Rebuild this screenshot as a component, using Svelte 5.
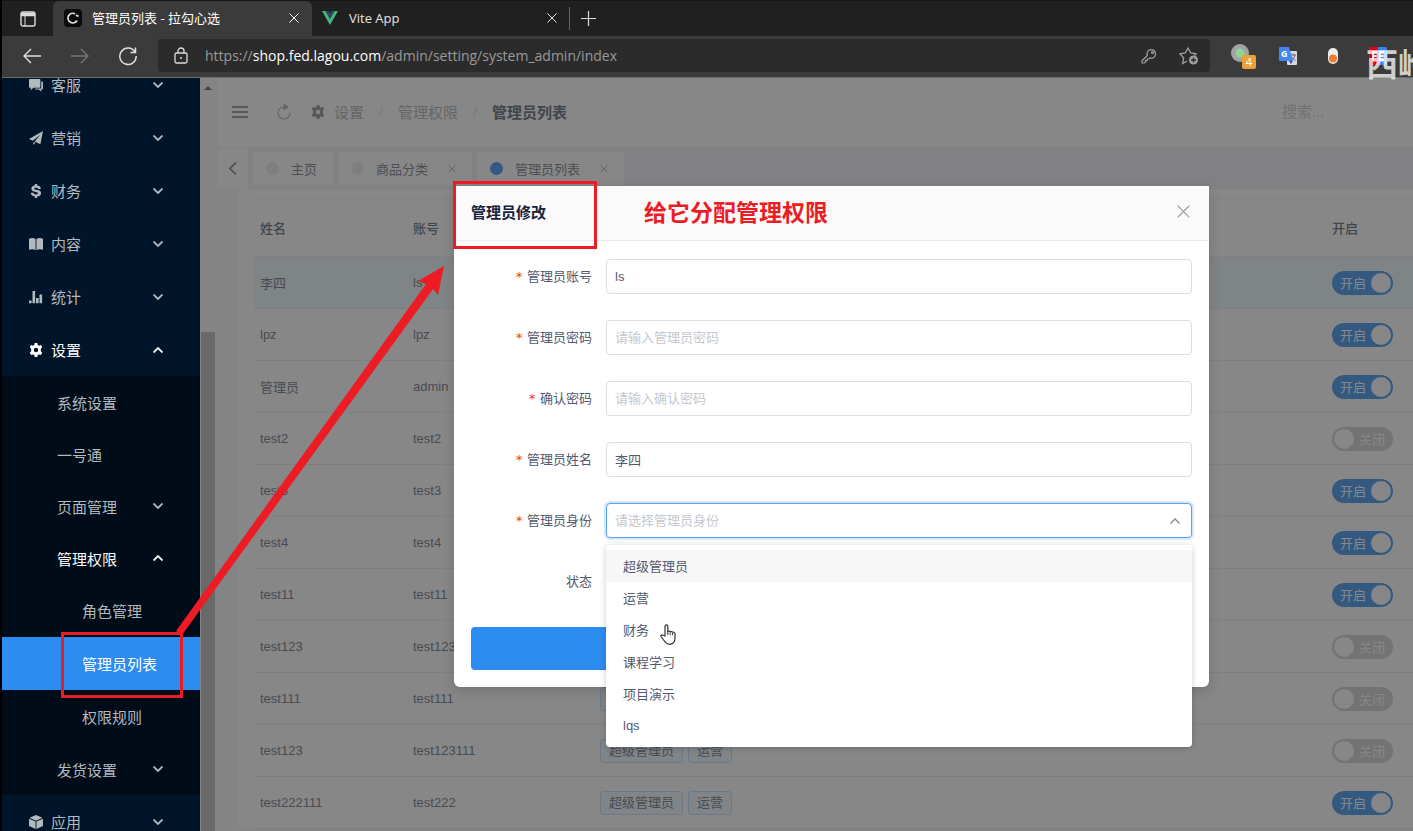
<script lang="ts">
  type MenuItem = {
    title: string;
    icon?: string;
    level: number;
    arrow?: 'down' | 'up';
    open?: boolean;
    active?: boolean;
  };

  const menu: MenuItem[] = [
    { title: '客服', icon: 'chat', level: 1, arrow: 'down' },
    { title: '营销', icon: 'plane', level: 1, arrow: 'down' },
    { title: '财务', icon: 'dollar', level: 1, arrow: 'down' },
    { title: '内容', icon: 'book', level: 1, arrow: 'down' },
    { title: '统计', icon: 'stats', level: 1, arrow: 'down' },
    { title: '设置', icon: 'gear', level: 1, arrow: 'up', open: true },
    { title: '系统设置', level: 2 },
    { title: '一号通', level: 2 },
    { title: '页面管理', level: 2, arrow: 'down' },
    { title: '管理权限', level: 2, arrow: 'up', open: true },
    { title: '角色管理', level: 3 },
    { title: '管理员列表', level: 3, active: true },
    { title: '权限规则', level: 3 },
    { title: '发货设置', level: 2, arrow: 'down' },
    { title: '应用', icon: 'cube', level: 1, arrow: 'down' },
  ];

  // Solid 16x16 icons
  const icons: Record<string, string> = {
    chat: 'M1 1h11a1 1 0 0 1 1 1v8a1 1 0 0 1-1 1H5l-3 3v-3H1a1 1 0 0 1-1-1V2a1 1 0 0 1 1-1zM14 4h1a1 1 0 0 1 1 1v7a1 1 0 0 1-1 1h-1v2.500L11 13H7v-1h6a1 1 0 0 0 1-1z',
    plane: 'M16 0L0 9l4.500 2L13 4 6.500 12l6.500 3zM5 12.500V16l2.500-2.500z',
    dollar:
      'M6.700 0h2.600v1.800c2.600.3 4.200 1.700 4.200 3.900h-3.200c0-1-.7-1.500-2.200-1.500-1.400 0-2 .4-2 1.100 0 .8.9 1 2.800 1.400C11.700 7.200 13.800 8.100 13.800 10.600c0 2.100-1.700 3.400-4.500 3.700V16H6.700v-1.700c-3-.3-4.600-1.800-4.600-4.200h3.200c0 1.200.9 1.800 2.600 1.800 1.600 0 2.400-.4 2.400-1.300 0-.9-.9-1.200-2.900-1.600C4.800 8.400 2.700 7.600 2.700 5.300 2.700 3.400 4.200 2.100 6.700 1.800z',
    book: 'M0 2c3-1.500 5.500-1.200 7.500.2V15C5.500 13.700 3 13.500 0 14.500zM8.500 2.200C10.500.8 13 .5 16 2v12.500c-3-1-5.500-.8-7.500.5z',
    stats: 'M0 12h3v3H0zM4 1h3v14H4zM8 9h3v6H8zM12 5h3v10h-3z',
    gear: 'M6.500 0h3l.5 2.200 1.400.8 2.200-.7 1.500 2.600L13.500 6.500v3l1.600 1.600-1.500 2.600-2.200-.7-1.400.8-.5 2.200h-3L6 13.800 4.600 13l-2.200.7L.9 11.100 2.500 9.500v-3L.9 4.900l1.500-2.600 2.200.7L6 2.200zM8 5.500a2.500 2.500 0 1 0 0 5 2.500 2.500 0 0 0 0-5z',
    cube: 'M8 0l7.500 3.200L8 6.500.5 3.200zM0 4.200l7.500 3.200V16L0 12.500zM16 4.200L8.500 7.400V16l7.500-3.500z',
  };

  const pageTabs = [
    { title: '主页', closable: false, active: false },
    { title: '商品分类', closable: true, active: false },
    { title: '管理员列表', closable: true, active: true },
  ];

  type Admin = { name: string; account: string; on: boolean; roles?: string[]; selected?: boolean };

  let admins: Admin[] = $state([
    { name: '李四', account: 'ls', on: true, selected: true },
    { name: 'lpz', account: 'lpz', on: true },
    { name: '管理员', account: 'admin', on: true },
    { name: 'test2', account: 'test2', on: false },
    { name: 'test3', account: 'test3', on: true },
    { name: 'test4', account: 'test4', on: true },
    { name: 'test11', account: 'test11', on: true },
    { name: 'test123', account: 'test123', on: false },
    { name: 'test111', account: 'test111', on: false, roles: ['超级管理员', '运营'] },
    { name: 'test123', account: 'test123111', on: false, roles: ['超级管理员', '运营'] },
    { name: 'test222111', account: 'test222', on: true, roles: ['超级管理员', '运营'] },
  ]);

  const roles = ['超级管理员', '运营', '财务', '课程学习', '项目演示', 'lqs'];

  let account = $state('ls');
  let password = $state('');
  let confirmPassword = $state('');
  let realName = $state('李四');
  let role = $state('');
  let enabled = $state(true);
  let listOpen = $state(true);

  function pickRole(value: string) {
    role = value;
    listOpen = false;
  }
</script>

{#snippet solid(name: string)}
  <svg class="solid" viewBox="0 0 16 16" aria-hidden="true">
    <path d={icons[name]} fill="currentColor" fill-rule="evenodd" />
  </svg>
{/snippet}

{#snippet cross()}
  <svg class="cross" viewBox="0 0 10 10" aria-hidden="true">
    <path d="M0.500.5l9 9M9.500.5l-9 9" fill="none" stroke="currentColor" />
  </svg>
{/snippet}

<div class="window">
  <header class="browser">
    <div class="tab-strip">
      <button class="tab-actions" aria-label="标签操作">
        <svg width="16" height="16" viewBox="0 0 16 16" fill="none" stroke="#ddd">
          <rect x="1" y="1" width="14" height="14" rx="2" stroke-width="1.400" />
          <path d="M1 3.500h14" stroke-width="3.500" />
          <path d="M5 4v11" />
        </svg>
      </button>
      <div class="tab current">
        <svg class="favicon" viewBox="0 0 18 18">
          <rect width="18" height="18" rx="4" fill="#0a0a0a" />
          <path d="M11 4.800A4.800 4.800 0 1 0 13 11.500" fill="none" stroke="#ddd" stroke-width="1.800" />
          <path d="M12 6l2.500 1.500" stroke="#ddd" stroke-width="2" />
        </svg>
        <span class="tab-title">管理员列表 - 拉勾心选</span>
        <button class="tab-close" aria-label="关闭标签">{@render cross()}</button>
      </div>
      <div class="tab">
        <svg class="favicon" viewBox="0 0 18 18">
          <path d="M1 2h3.500L9 10l4.500-8H17L9 16z" fill="#41b883" />
          <path d="M4.500 2h3L9 4.800 10.500 2h3L9 10z" fill="#35495e" />
        </svg>
        <span class="tab-title">Vite App</span>
        <button class="tab-close" aria-label="关闭标签">{@render cross()}</button>
      </div>
      <button class="new-tab" aria-label="新建标签">
        <svg width="15" height="15" viewBox="0 0 15 15" stroke="#ddd" stroke-width="1.200">
          <path d="M7.500 0v15M0 7.500h15" />
        </svg>
      </button>
    </div>

    <div class="toolbar">
      <nav class="history">
        <button aria-label="后退">
          <svg width="20" height="20" viewBox="0 0 20 20" fill="none" stroke="#e0e0e0" stroke-width="1.400">
            <path d="M9 3l-7 7 7 7M2 10h17" />
          </svg>
        </button>
        <button aria-label="前进">
          <svg width="20" height="20" viewBox="0 0 20 20" fill="none" stroke="#757575" stroke-width="1.400">
            <path d="M11 3l7 7-7 7M18 10H1" />
          </svg>
        </button>
        <button aria-label="刷新">
          <svg width="20" height="20" viewBox="0 0 20 20" fill="none" stroke="#e0e0e0" stroke-width="1.500">
            <path d="M17 6a8.200 8.200 0 1 0 1.200 4M17.500 1.500V6.500H12.500" />
          </svg>
        </button>
      </nav>
      <div class="address">
        <svg width="14" height="18" viewBox="0 0 14 18" fill="none" stroke="#ddd" stroke-width="1.300">
          <rect x="1" y="6" width="12" height="10" rx="1.500" />
          <path d="M4 6V4a3 3 0 0 1 6 0v2" />
          <circle cx="7" cy="11" r="1" fill="#ddd" stroke="none" />
        </svg>
        <a class="url" href="#top">https://<b>shop.fed.lagou.com</b>/admin/setting/system_admin/index</a>
        <svg width="16" height="16" viewBox="0 0 16 16" fill="none" stroke="#a0a0a0" stroke-width="1.200">
          <path d="M6.300 7.500A4.300 4.300 0 1 1 9 10L7.800 11H6.200v1.700H4.500V14L3.500 15H1v-2.200z" />
          <circle cx="11.500" cy="4.500" r="1" />
        </svg>
        <svg width="20" height="20" viewBox="0 0 20 20" fill="none" stroke="#a0a0a0" stroke-width="1.300">
          <path d="M8 15l-4.300 2.500.9-5.600L1 7.800l5.300-.8L9 2l2.700 5 5.300.8-1.500 1.700" />
          <circle cx="14.500" cy="14" r="4.500" fill="#a0a0a0" stroke="none" />
          <path d="M14.500 11.500v5M12 14h5" stroke="#2b2b2b" />
        </svg>
      </div>
      <div class="extensions">
        <svg width="25" height="26" viewBox="0 0 25 26">
          <circle cx="9" cy="10" r="9" fill="#a3a3a3" />
          <circle cx="9" cy="10" r="4.500" fill="#8fd694" />
          <rect x="11" y="12" width="14" height="14" rx="2" fill="#e9a13b" />
          <text x="18" y="23" text-anchor="middle" font-size="11" fill="#fff">4</text>
        </svg>
        <svg width="18" height="18" viewBox="0 0 18 18">
          <rect x="8" y="4" width="10" height="14" rx="1" fill="#d8d8d8" />
          <path d="M11 8h6M14 6.500V8M16 8c-.5 3-2 4-4 5M12.500 9.500c.8 2 2 3 4 3.800" stroke="#667" fill="none" />
          <path d="M1 0h9l4 14H1a1 1 0 0 1-1-1V1a1 1 0 0 1 1-1z" fill="#4285f4" />
          <path d="M10 14h4l-2 3z" fill="#2b4fd0" />
          <text x="2" y="10" font-size="9" font-weight="bold" fill="#fff">G</text>
        </svg>
        <svg width="10" height="16" viewBox="0 0 10 16">
          <rect width="10" height="16" rx="5" fill="#eee" />
          <circle cx="5" cy="10.500" r="4" fill="#ee7b30" />
        </svg>
        <svg width="18" height="18" viewBox="0 0 18 18">
          <path d="M0 2a2 2 0 0 1 2-2h7v18H2a2 2 0 0 1-2-2z" fill="#e60012" />
          <path d="M9 0h7a2 2 0 0 1 2 2v14a2 2 0 0 1-2 2H9z" fill="#3b82f6" />
          <path d="M8 5H4v8M4 9h3.500M15 5h-4v8h4M11 9h3.500" fill="none" stroke="#fff" stroke-width="1.800" />
        </svg>
      </div>
    </div>
  </header>

  <div class="app">
    <aside class="sidebar">
      <ul class="menu">
        {#each menu as item}
          <li class="level-{item.level}" class:open={item.open} class:active={item.active}>
            <a href="#menu">
              {#if item.icon}{@render solid(item.icon)}{/if}
              <span>{item.title}</span>
              {#if item.arrow}
                <svg class="chevron" class:up={item.arrow === 'up'} viewBox="0 0 10 6" aria-hidden="true">
                  <path d="M.5.5L5 5 9.500.5" fill="none" stroke="currentColor" stroke-width="1.800" />
                </svg>
              {/if}
            </a>
          </li>
        {/each}
      </ul>
    </aside>

    <main class="main">
      <div class="scrollbar">
        <span class="scroll-arrow"></span>
        <span class="scroll-thumb"></span>
      </div>

      <div class="page">
        <div class="page-header">
          <button class="hamburger" aria-label="折叠菜单"><i></i><i></i><i></i></button>
          <button class="reload" aria-label="刷新">
            <svg width="14" height="16" viewBox="0 0 14 16" fill="none" stroke="#aaa" stroke-width="1.200">
              <path d="M7 3a6 6 0 1 0 6 6" />
              <path d="M7 .5L11 3 7 5.500z" fill="#aaa" />
            </svg>
          </button>
          <nav class="breadcrumb">
            {@render solid('gear')}
            <a href="#setting">设置</a>
            <span class="slash">/</span>
            <a href="#auth">管理权限</a>
            <span class="slash">/</span>
            <strong>管理员列表</strong>
          </nav>
          <input class="search" type="text" placeholder="搜索..." aria-label="搜索" />
        </div>

        <div class="page-tabs">
          <button class="tabs-prev" aria-label="向左">
            <svg width="8" height="13" viewBox="0 0 8 13" fill="none" stroke="currentColor" stroke-width="1.600">
              <path d="M7 .5l-6 6 6 6" />
            </svg>
          </button>
          {#each pageTabs as tab}
            <div class="page-tab" class:active={tab.active}>
              <span class="dot"></span>
              <span>{tab.title}</span>
              {#if tab.closable}
                <button aria-label="关闭{tab.title}">{@render cross()}</button>
              {/if}
            </div>
          {/each}
        </div>

        <div class="card">
          <table>
            <colgroup>
              <col class="col-name" />
              <col class="col-account" />
              <col />
              <col class="col-status" />
            </colgroup>
            <thead>
              <tr><th>姓名</th><th>账号</th><td></td><th>开启</th></tr>
            </thead>
            <tbody>
              {#each admins as admin}
                <tr class:selected={admin.selected}>
                  <td>{admin.name}</td>
                  <td>{admin.account}</td>
                  <td>
                    {#each admin.roles ?? [] as r}
                      <span class="tag">{r}</span>
                    {/each}
                  </td>
                  <td>
                    <label class="switch" class:on={admin.on}>
                      <input type="checkbox" bind:checked={admin.on} />
                      <span>{admin.on ? '开启' : '关闭'}</span>
                    </label>
                  </td>
                </tr>
              {/each}
            </tbody>
          </table>
        </div>
      </div>

      <div class="mask">
        <div class="modal" role="dialog" aria-labelledby="modal-title">
          <div class="modal-header">
            <h2 id="modal-title">管理员修改</h2>
            <button class="modal-close" aria-label="关闭">{@render cross()}</button>
          </div>
          <form class="modal-body">
            <div class="field required">
              <label for="account">管理员账号</label>
              <input id="account" type="text" bind:value={account} />
            </div>
            <div class="field required">
              <label for="password">管理员密码</label>
              <input id="password" type="password" placeholder="请输入管理员密码" bind:value={password} />
            </div>
            <div class="field required">
              <label for="confirm">确认密码</label>
              <input id="confirm" type="password" placeholder="请输入确认密码" bind:value={confirmPassword} />
            </div>
            <div class="field required">
              <label for="real-name">管理员姓名</label>
              <input id="real-name" type="text" bind:value={realName} />
            </div>
            <div class="field required">
              <label for="role">管理员身份</label>
              <div class="select">
                <select id="role" class:empty={!role} bind:value={role}>
                  <option value="">请选择管理员身份</option>
                  {#each roles as r}
                    <option value={r}>{r}</option>
                  {/each}
                </select>
                <svg class="chevron up" viewBox="0 0 10 6" aria-hidden="true">
                  <path d="M.5.5L5 5 9.500.5" fill="none" stroke="currentColor" stroke-width="1.300" />
                </svg>
                {#if listOpen}
                  <div class="options">
                    {#each roles as r, i}
                      <button type="button" class:focus={i === 0} onclick={() => pickRole(r)}>{r}</button>
                    {/each}
                  </div>
                {/if}
              </div>
            </div>
            <div class="field">
              <label for="status">状态</label>
              <input id="status" type="checkbox" bind:checked={enabled} />
            </div>
            <button class="submit" type="button" aria-label="提交"></button>
          </form>
        </div>
      </div>
    </main>
  </div>

  <!-- Tutorial marks drawn over the page -->
  <div class="marks">
    <div class="box box-menu"></div>
    <div class="box box-title"></div>
    <svg class="arrow" viewBox="0 0 280 380">
      <path d="M6 371L256 24 248 21 274 6 268 35 263 29 12 375z" fill="#ed1c24" />
    </svg>
    <p class="note">给它分配管理权限</p>
    <p class="watermark">西岭</p>
    <svg class="pointer" viewBox="0 0 17 21">
      <path
        d="M5 12V2.200a1.400 1.400 0 0 1 2.800 0V8c0-1.200 2.400-1.200 2.400.3 0-1.200 2.400-1 2.400.5 0-1 2.400-.8 2.400.8v4.500c0 3.500-2 6.200-5.500 6.200-3 0-4-1.500-5.500-3.800L1 12.500c-.6-1.200.8-2.200 1.900-1.200z"
        fill="#fff"
        stroke="#333"
        stroke-width="1.200"
      />
      <path d="M7.800 8v3M10.200 8.500v2.700M12.600 9v2.200" stroke="#333" />
    </svg>
  </div>
</div>

<style>
  :global(body) {
    background: #000;
  }

  .window,
  .window * {
    box-sizing: border-box;
  }

  .window {
    position: relative;
    display: flex;
    flex-direction: column;
    height: 100vh;
    overflow: hidden;
    padding-left: 2px;
    font-family: 'Liberation Sans', 'Noto Sans CJK SC', sans-serif;
    font-size: 13px;
    color: #515a6e;
  }

  button {
    padding: 0;
    border: none;
    background: none;
    color: inherit;
    font: inherit;
    cursor: pointer;
  }

  a {
    color: inherit;
    text-decoration: none;
  }

  svg {
    display: block;
    flex: none;
  }

  .cross {
    width: 10px;
    height: 10px;
  }

  .solid {
    width: 14px;
    height: 14px;
  }

  .chevron {
    width: 10px;
    height: 6px;
  }

  .chevron.up {
    transform: rotate(180deg);
  }

  /* Browser */
  .browser {
    flex: none;
    background: #3b3b3b;
    border-bottom: 1px solid #6a6e73;
    font-family: 'Open Sans', 'Noto Sans CJK SC', sans-serif;
  }

  .tab-strip {
    display: flex;
    height: 36px;
    background: #202020;
    border-top: 1px solid #151515;
  }

  .tab-actions {
    width: 51px;
    display: flex;
    align-items: center;
    justify-content: center;
  }

  .tab {
    display: flex;
    align-items: center;
    width: 258px;
    padding: 0 12px 2px 9px;
    color: #e4e4e4;
    border-right: 1px solid transparent;
  }

  .tab.current {
    width: 259px;
    padding-left: 11px;
    background: #3b3b3b;
    border-radius: 6px 6px 0 0;
    color: #fff;
  }

  .favicon {
    width: 18px;
    height: 18px;
    margin-right: 10px;
  }

  .tab-title {
    flex: 1;
  }

  .tab:not(.current) {
    border-image: linear-gradient(transparent 20%, #666 20%, #666 80%, transparent 80%) 1;
  }

  .new-tab {
    padding: 0 11px;
  }

  .toolbar {
    display: flex;
    align-items: center;
    height: 41px;
    padding-bottom: 2px;
  }

  .history {
    display: flex;
    gap: 28px;
    padding: 0 20px;
  }

  .address {
    flex: 1;
    display: flex;
    align-items: center;
    gap: 22px;
    height: 33px;
    padding: 0 11px 0 16px;
    border-radius: 4px;
    background: #2b2b2b;
  }

  .url {
    flex: 1;
    font-size: 14px;
    color: #9a9a9a;
    margin-left: -5px;
  }

  .url b {
    font-weight: 400;
    color: #fff;
  }

  .extensions {
    display: flex;
    align-items: center;
    gap: 31px;
    width: 203px;
    padding-left: 21px;
  }

  .extensions svg:first-child {
    margin-right: -8px;
  }

  /* Layout */
  .app {
    flex: 1;
    display: flex;
    min-height: 0;
  }

  .sidebar {
    flex: none;
    width: 198px;
    overflow: hidden;
    background: #001529;
  }

  .menu {
    margin: -20px 0 0;
    padding: 0;
    list-style: none;
    font-size: 15px;
    color: #b2b9bf;
  }

  .menu a {
    display: flex;
    align-items: center;
    height: 53px;
    padding: 0 37px 0 27px;
  }

  .menu span {
    flex: 1;
  }

  .menu .solid {
    margin-right: 8px;
  }

  .menu .level-2 a {
    height: 52px;
    padding-left: 55px;
  }

  .menu .level-3 a {
    padding-left: 80px;
  }

  .level-2,
  .level-3 {
    background: #000c17;
  }

  .menu .open,
  .menu .active {
    color: #fff;
  }

  .menu .active {
    background: #2d8cf0;
  }

  .main {
    position: relative;
    flex: 1;
    display: flex;
    min-width: 0;
    overflow: hidden;
    background: #f5f7f9;
  }

  .scrollbar {
    flex: none;
    display: flex;
    flex-direction: column;
    align-items: center;
    width: 18px;
    padding-right: 2px;
    background: #f8f8f8;
  }

  .scroll-arrow {
    margin-top: 8px;
    border: 4px solid transparent;
    border-top: none;
    border-bottom-color: #555;
  }

  .scroll-thumb {
    flex: 1;
    width: 14px;
    margin-top: 242px;
    background: #b4b4b4;
  }

  .page {
    flex: 1;
    min-width: 0;
  }

  .page-header {
    display: flex;
    align-items: center;
    height: 70px;
    padding: 0 14px 2px;
    background: #fff;
    border-bottom: 1px solid #eee;
    font-size: 15px;
  }

  .hamburger {
    display: flex;
    flex-direction: column;
    gap: 3px;
    width: 16px;
  }

  .hamburger i {
    height: 2px;
    background: #888;
  }

  .reload {
    margin: 0 20px 0 29px;
  }

  .breadcrumb {
    flex: 1;
    display: flex;
    align-items: center;
    color: #aaa;
  }

  .breadcrumb .solid {
    color: #888;
    margin-right: 9px;
  }

  .slash {
    width: 34px;
    text-align: center;
    color: #dcdee2;
  }

  .breadcrumb strong {
    color: #515a6e;
  }

  .search {
    width: 117px;
    padding: 0;
    border: none;
    background: none;
    font: inherit;
  }

  .search::placeholder {
    color: #c5c8ce;
  }

  .page-tabs {
    display: flex;
    align-items: center;
    gap: 5px;
    height: 41px;
    background: #f0f0f4;
    color: #6b7280;
  }

  .tabs-prev {
    display: flex;
    align-items: center;
    justify-content: center;
    width: 30px;
    height: 41px;
    background: #fff;
  }

  .page-tab {
    display: flex;
    align-items: center;
    height: 33px;
    padding: 0 16px 0 13px;
    background: #fff;
  }

  .dot {
    width: 13px;
    height: 13px;
    margin-right: 12px;
    border-radius: 50%;
    background: #ebebef;
  }

  .active .dot {
    background: #2d8cf0;
  }

  .page-tab button {
    margin-left: 20px;
    color: #999;
  }

  .page-tab .cross,
  .page-tab :global(.cross) {
    width: 8px;
    height: 8px;
  }

  .card {
    margin: 1px 0 0 20px;
    padding: 8px 0 0 16px;
    background: #fff;
  }

  /* Admin table */
  table {
    width: 100%;
    table-layout: fixed;
    border-collapse: collapse;
  }

  .col-name {
    width: 153px;
  }

  .col-account {
    width: 187px;
  }

  .col-status {
    width: 87px;
  }

  th,
  td {
    height: 52px;
    padding: 0 0 0 6px;
    border-bottom: 1px solid #e8eaec;
    text-align: left;
    font-weight: 500;
  }

  thead th,
  thead td {
    height: 58px;
    border-top: 1px solid #f2f2f2;
  }

  tbody td {
    font-weight: 400;
    color: #626a7c;
  }

  .selected {
    background: #ebf7ff;
  }

  .tag {
    display: inline-block;
    height: 24px;
    line-height: 22px;
    margin-right: 5px;
    padding: 0 8px;
    border: 1px solid #b5dcff;
    border-radius: 3px;
    background: #f0faff;
  }

  .switch {
    position: relative;
    display: flex;
    align-items: center;
    justify-content: flex-end;
    width: 61px;
    height: 24px;
    padding: 0 8px;
    border-radius: 12px;
    background: #ccc;
    color: #fff;
  }

  .switch input {
    position: absolute;
    inset: 0;
    opacity: 0;
    margin: 0;
  }

  .switch::after {
    content: '';
    position: absolute;
    top: 2px;
    left: 2px;
    width: 20px;
    height: 20px;
    border-radius: 50%;
    background: #fff;
  }

  .switch.on {
    justify-content: flex-start;
    background: #2d8cf0;
  }

  .switch.on::after {
    left: 39px;
  }

  /* Modal */
  .mask {
    position: absolute;
    inset: 0;
    padding: 108px 204px 0 254px;
    background: rgba(55, 55, 55, 0.6);
  }

  .modal {
    border-radius: 6px;
    background: #fff;
    box-shadow: 0 4px 12px rgba(0, 0, 0, 0.15);
  }

  .modal-header {
    display: flex;
    align-items: center;
    justify-content: space-between;
    height: 55px;
    padding: 0 19px 4px 17px;
    border-bottom: 1px solid #e8eaec;
    background: #fafafa;
  }

  .modal-header h2 {
    margin: 0;
    font-size: 15px;
    font-weight: 700;
    color: #17233d;
  }

  .modal-close {
    color: #999;
  }

  .modal-close .cross,
  .modal-close :global(.cross) {
    width: 13px;
    height: 13px;
  }

  .modal-body {
    display: flex;
    flex-direction: column;
    gap: 26px;
    padding: 18px 17px 17px;
  }

  .field {
    display: flex;
    align-items: center;
    height: 35px;
  }

  .field label {
    width: 135px;
    padding: 0 14px 2px 0;
    text-align: right;
  }

  .required label::before {
    content: '*';
    margin-right: 4px;
    font-family: 'DejaVu Sans Mono', monospace;
    color: #ed4014;
  }

  .field input:not([type='checkbox']),
  .field select {
    flex: 1;
    width: 100%;
    height: 35px;
    padding: 0 8px;
    border: 1px solid #dcdee2;
    border-radius: 4px;
    outline: none;
    background: #fff;
    font: inherit;
    color: inherit;
  }

  .field input::placeholder {
    color: #c5c8ce;
  }

  .select {
    position: relative;
    flex: 1;
  }

  .field select {
    display: block;
    appearance: none;
    border-color: #57a3f3;
    box-shadow: 0 0 0 2px rgba(45, 140, 240, 0.2);
  }

  .field select.empty {
    color: #c5c8ce;
  }

  .select .chevron {
    position: absolute;
    top: 15px;
    right: 12px;
    color: #808695;
  }

  .options {
    position: absolute;
    top: calc(100% + 7px);
    left: 0;
    right: 0;
    display: flex;
    flex-direction: column;
    padding: 5px 0;
    border-radius: 4px;
    background: #fff;
    box-shadow: 0 1px 6px rgba(0, 0, 0, 0.2);
  }

  .options button {
    height: 32px;
    padding: 0 17px 1px;
    text-align: left;
  }

  .options .focus {
    background: #f7f7f7;
  }

  .submit {
    height: 43px;
    margin-top: 2px;
    border-radius: 4px;
    background: #2d8cf0;
  }

  /* Marks */
  .marks {
    position: absolute;
    inset: 0;
    overflow: hidden;
    pointer-events: none;
  }

  .marks > * {
    position: absolute;
    margin: 0;
  }

  .box {
    border: 3px solid #ed1c24;
  }

  .box-menu {
    left: 61px;
    top: 632px;
    width: 122px;
    height: 66px;
  }

  .box-title {
    left: 453px;
    top: 181px;
    width: 144px;
    height: 68px;
  }

  .arrow {
    left: 170px;
    top: 260px;
    width: 280px;
    height: 380px;
  }

  .note {
    left: 644px;
    top: 196px;
    font-size: 23px;
    line-height: 34px;
    font-weight: 700;
    color: #ed1c24;
  }

  .watermark {
    left: 1366px;
    top: 41px;
    font-size: 32px;
    line-height: 48px;
    font-weight: 700;
    white-space: nowrap;
    color: rgba(255, 255, 255, 0.75);
  }

  .pointer {
    left: 660px;
    top: 624px;
    width: 17px;
    height: 21px;
  }
</style>
